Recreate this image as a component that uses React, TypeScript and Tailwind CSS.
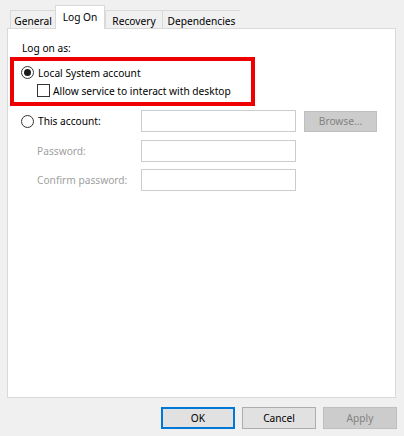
import type { ReactNode } from 'react';

const font = { fontFamily: '"Noto Sans", "Liberation Sans", Arial, sans-serif' };

function Radio({ checked }: { checked?: boolean }) {
  return (
    <span className="flex h-[13px] w-[13px] shrink-0 items-center justify-center rounded-full border border-[#333333] bg-white">
      {checked && <span className="h-[7px] w-[7px] rounded-full bg-[#1a1a1a]" />}
    </span>
  );
}

function Tab({ label, active, width }: { label: string; active?: boolean; width: string }) {
  if (active) {
    return (
      <div
        className={`relative z-10 flex h-[24px] items-start justify-center border border-b-0 border-[#d9d9d9] bg-white pt-[4px] text-black ${width}`}
      >
        {label}
      </div>
    );
  }
  return (
    <div
      className={`flex h-[19px] items-center justify-center border border-b-0 border-r-0 border-[#d9d9d9] bg-[#f0f0f0] pt-px text-black ${width}`}
    >
      {label}
    </div>
  );
}

function Field({ label, disabled, children }: { label: ReactNode; disabled?: boolean; children?: ReactNode }) {
  return (
    <div className="flex h-[22px] items-center">
      <div className={`w-[120px] shrink-0 ${disabled ? 'text-[#a0a0a0]' : 'text-black'}`}>{label}</div>
      <div className="h-[22px] w-[155px] border border-[#cccccc] bg-white" />
      {children}
    </div>
  );
}

function Button({ label, kind }: { label: string; kind: 'default' | 'normal' | 'disabled' }) {
  const styles = {
    default: 'border-2 border-[#0078d7] bg-[#e1e1e1] text-black',
    normal: 'border border-[#adadad] bg-[#e1e1e1] text-black',
    disabled: 'border border-[#bfbfbf] bg-[#cccccc] text-[#838383]'
  };
  return (
    <div className={`flex h-[22px] w-[74px] items-center justify-center ${styles[kind]}`}>{label}</div>
  );
}

export default function App() {
  return (
    <div className="flex h-[436px] w-[404px] flex-col bg-[#f0f0f0] pt-[5px] text-[10.2px] leading-[14px]" style={font}>
      <div className="flex h-[24px] items-end pl-[10px]">
        <Tab label="General" width="w-[45px]" />
        <Tab label="Log On" width="w-[50px]" active />
        <Tab label="Recovery" width="w-[57px]" />
        <Tab label="Dependencies" width="w-[78px] border-r" />
      </div>

      <div className="relative ml-[7px] -mt-px h-[370px] w-[389px] border border-[#d9d9d9] bg-white">
        <div className="mt-[12px] pl-[14px] text-black">Log on as:</div>

        <div className="ml-[2px] mt-[2px] flex h-[49px] w-[245px] flex-col border-4 border-[#ee0000] pl-[7px] pt-[5px]">
          <div className="flex h-[13px] items-center gap-[4px] text-black">
            <Radio checked />
            <span>Local System account</span>
          </div>
          <div className="ml-[16px] mt-[5px] flex h-[13px] items-center gap-[3px] text-black">
            <span className="h-[13px] w-[13px] shrink-0 border border-[#333333] bg-white" />
            <span>Allow service to interact with desktop</span>
          </div>
        </div>

        <div className="mt-[4px] flex flex-col pl-[13px]">
          <Field
            label={
              <div className="flex items-center gap-[4px]">
                <Radio />
                <span>This account:</span>
              </div>
            }
          >
            <div className="ml-[8px] flex h-[21px] w-[73px] items-center justify-center border border-[#bfbfbf] bg-[#cccccc] text-[#838383]">
              Browse...
            </div>
          </Field>
          <div className="mt-[8px]">
            <Field label={<span className="pl-[16px]">Password:</span>} disabled />
          </div>
          <div className="mt-[7px]">
            <Field label={<span className="pl-[16px]">Confirm password:</span>} disabled />
          </div>
        </div>
      </div>

      <div className="mt-[9px] flex justify-end gap-[7px] pr-[7px]">
        <Button label="OK" kind="default" />
        <Button label="Cancel" kind="normal" />
        <Button label="Apply" kind="disabled" />
      </div>
    </div>
  );
}
